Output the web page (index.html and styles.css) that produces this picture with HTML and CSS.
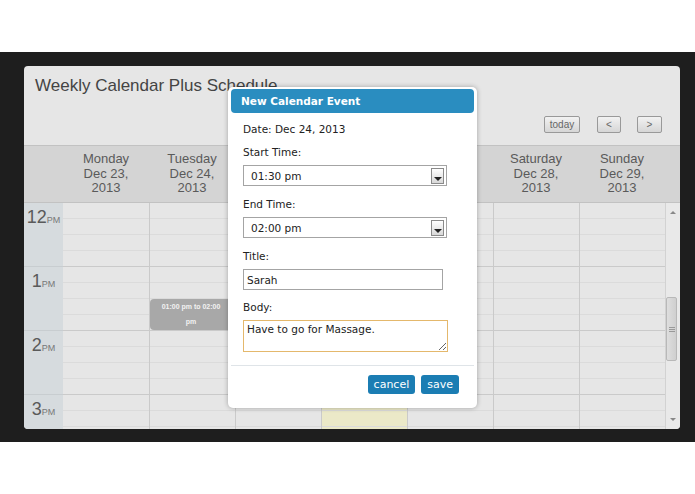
FILE: index.html
```html
<!DOCTYPE html>
<html lang="en">
<head>
    <meta charset="UTF-8">
    <title>Weekly Calendar Plus Schedule</title>
    <link rel="stylesheet" href="styles.css">
</head>
<body>
    <div class="screen">
        <div class="calendar">
            <!-- Toolbar -->
            <div class="toolbar">
                <h1 class="cal-title">Weekly Calendar Plus Schedule</h1>
                <div class="nav">
                    <button class="nav-btn nav-today">today</button>
                    <button class="nav-btn nav-prev">&lt;</button>
                    <button class="nav-btn nav-next">&gt;</button>
                </div>
            </div>

            <!-- Day headers -->
            <div class="week-head">
                <div></div>
                <div class="day-name">Monday<br>Dec 23,<br>2013</div>
                <div class="day-name">Tuesday<br>Dec 24,<br>2013</div>
                <div class="day-name">Wednesday<br>Dec 25,<br>2013</div>
                <div class="day-name">Thursday<br>Dec 26,<br>2013</div>
                <div class="day-name">Friday<br>Dec 27,<br>2013</div>
                <div class="day-name">Saturday<br>Dec 28,<br>2013</div>
                <div class="day-name">Sunday<br>Dec 29,<br>2013</div>
            </div>

            <!-- Hour grid -->
            <div class="week-body">
                <div class="hours">
                    <div class="hour-row">
                        <div class="time">12<span>PM</span></div>
                        <div class="cell"></div><div class="cell"></div><div class="cell"></div>
                        <div class="cell today"></div><div class="cell"></div><div class="cell"></div><div class="cell"></div>
                    </div>
                    <div class="hour-row">
                        <div class="time">1<span>PM</span></div>
                        <div class="cell"></div>
                        <div class="cell">
                            <div class="event">01:00 pm to 02:00 pm</div>
                        </div>
                        <div class="cell"></div>
                        <div class="cell today"></div><div class="cell"></div><div class="cell"></div><div class="cell"></div>
                    </div>
                    <div class="hour-row">
                        <div class="time">2<span>PM</span></div>
                        <div class="cell"></div><div class="cell"></div><div class="cell"></div>
                        <div class="cell today"></div><div class="cell"></div><div class="cell"></div><div class="cell"></div>
                    </div>
                    <div class="hour-row">
                        <div class="time">3<span>PM</span></div>
                        <div class="cell"></div><div class="cell"></div><div class="cell"></div>
                        <div class="cell today"></div><div class="cell"></div><div class="cell"></div><div class="cell"></div>
                    </div>
                </div>
                <div class="scrollbar">
                    <span class="arrow-up"></span>
                    <div class="thumb"><span class="grip"></span></div>
                    <span class="arrow-down"></span>
                </div>
            </div>

            <!-- New event dialog -->
            <div class="modal">
                <div class="modal-head">New Calendar Event</div>
                <div class="modal-body">
                    <div class="form-date">Date: Dec 24, 2013</div>
                    <label class="form-label">Start Time:</label>
                    <div class="select"><span>01:30 pm</span><span class="select-btn"></span></div>
                    <label class="form-label">End Time:</label>
                    <div class="select"><span>02:00 pm</span><span class="select-btn"></span></div>
                    <label class="form-label">Title:</label>
                    <input class="input" type="text" value="Sarah">
                    <label class="form-label">Body:</label>
                    <textarea class="textarea">Have to go for Massage.</textarea>
                </div>
                <div class="modal-foot">
                    <button class="btn">cancel</button>
                    <button class="btn">save</button>
                </div>
            </div>
        </div>
    </div>
</body>
</html>
```

FILE: styles.css
```css
* {
    box-sizing: border-box;
}

body {
    margin: 0;
    background: #ffffff;
    font-family: "Liberation Sans", Arial, sans-serif;
}

.screen {
    margin-top: 52px;
    height: 390px;
    background: #1e1e1e;
    padding: 14px 15px 0 24px;
}

.calendar {
    position: relative;
    width: 656px;
    height: 363px;
    background: #e6e6e6;
    border-radius: 4px;
    overflow: hidden;
    display: flex;
    flex-direction: column;
}

/* Toolbar */
.toolbar {
    height: 79px;
    flex: none;
    display: flex;
    justify-content: space-between;
    padding: 10px 18px 12px 11px;
}

.cal-title {
    margin: 0;
    font-size: 17px;
    line-height: 20px;
    font-weight: normal;
    color: #444;
}

.nav {
    align-self: flex-end;
    display: flex;
}

.nav-btn {
    height: 17px;
    padding: 0;
    border: 1px solid #999;
    border-radius: 2px;
    background: linear-gradient(#f2f2f2, #d6d6d6);
    font-family: "Liberation Sans", Arial, sans-serif;
    font-size: 10px;
    color: #666;
}

.nav-today {
    width: 36px;
    margin-right: 17px;
}

.nav-prev {
    width: 24px;
    margin-right: 16px;
}

.nav-next {
    width: 25px;
}

/* Day headers */
.week-head {
    flex: none;
    height: 58px;
    display: grid;
    grid-template-columns: 39px repeat(7, 1fr) 15px;
    align-items: center;
    background: #d4d4d4;
    border-top: 1px solid #c2c2c2;
    border-bottom: 1px solid #c2c2c2;
}

.day-name {
    text-align: center;
    font-size: 13px;
    line-height: 14.5px;
    color: #5a5a5a;
}

/* Hour grid */
.week-body {
    flex: 1;
    display: flex;
    overflow: hidden;
}

.hours {
    flex: 1;
}

.hour-row {
    height: 64px;
    display: grid;
    grid-template-columns: 39px repeat(7, 1fr);
}

.time {
    background: #d6dbde;
    border-bottom: 1px solid #c8cdd0;
    text-align: center;
    padding-top: 4px;
    font-size: 18px;
    line-height: 20px;
    color: #5a5a5a;
}

.time span {
    font-size: 9px;
    color: #777;
}

.cell {
    position: relative;
    border-left: 1px solid #cacaca;
    border-bottom: 1px solid #cacaca;
    background: repeating-linear-gradient(to bottom, transparent 0 15px, #dbdbdb 15px 16px);
}

.time + .cell {
    border-left: none;
}

.cell.today {
    background-color: #ebe9c8;
}

.event {
    position: absolute;
    top: 32px;
    left: 0;
    width: 82px;
    height: 31px;
    padding: 0 6px;
    background: #a8a8a8;
    border-radius: 4px;
    text-align: center;
    font-size: 7px;
    font-weight: bold;
    line-height: 15px;
    color: #f2f2f2;
}

/* Scrollbar */
.scrollbar {
    width: 15px;
    flex: none;
    display: flex;
    flex-direction: column;
    align-items: center;
    background: #e9e9e9;
    border-left: 1px solid #d2d2d2;
}

.arrow-up,
.arrow-down {
    width: 0;
    height: 0;
    border-left: 3px solid transparent;
    border-right: 3px solid transparent;
}

.arrow-up {
    margin-top: 8px;
    border-bottom: 3px solid #888;
}

.arrow-down {
    margin-top: auto;
    margin-bottom: 8px;
    border-top: 3px solid #888;
}

.thumb {
    width: 11px;
    height: 64px;
    margin-top: 83px;
    margin-right: 3px;
    background: linear-gradient(to right, #dedede, #cfcfcf);
    border: 1px solid #b8b8b8;
    border-radius: 2px;
    display: flex;
    align-items: center;
    justify-content: center;
}

.grip {
    width: 6px;
    height: 5px;
    border-top: 1px solid #999;
    border-bottom: 1px solid #999;
    background: linear-gradient(#999, #999) center / 6px 1px no-repeat;
}

/* Dialog */
.modal {
    position: absolute;
    left: 204px;
    top: 21px;
    width: 249px;
    height: 321px;
    padding: 2px 3px;
    background: #ffffff;
    border-radius: 5px;
    box-shadow: 0 0 5px rgba(0, 0, 0, 0.3);
    font-family: "DejaVu Sans", Verdana, sans-serif;
    font-size: 10.5px;
    color: #222;
}

.modal-head {
    height: 24px;
    padding-left: 10px;
    line-height: 24px;
    background: #2a8dc0;
    border-radius: 4px;
    color: #ffffff;
    font-weight: bold;
}

.modal-body {
    padding: 10px 12px 0 12px;
}

.form-date {
    line-height: 12px;
    margin-bottom: 11px;
}

.form-label {
    display: block;
    line-height: 12px;
    margin-bottom: 7px;
}

.select {
    width: 204px;
    height: 21px;
    margin-bottom: 12px;
    border: 1px solid #a4a4a4;
    display: flex;
    align-items: center;
    justify-content: space-between;
    padding: 0 2px 0 7px;
}

.select-btn {
    width: 13px;
    height: 16px;
    border: 1px solid #8a8a8a;
    background: linear-gradient(#ffffff, #d8d8d8);
    position: relative;
}

.select-btn::after {
    content: "";
    position: absolute;
    left: 2px;
    top: 8px;
    border-left: 4px solid transparent;
    border-right: 4px solid transparent;
    border-top: 4px solid #222;
}

.input {
    display: block;
    width: 200px;
    height: 21px;
    margin: 0 0 11px;
    padding: 0 3px;
    border: 1px solid #a4a4a4;
    font-family: "DejaVu Sans", Verdana, sans-serif;
    font-size: 10.5px;
    color: #222;
}

.textarea {
    display: block;
    width: 205px;
    height: 32px;
    margin: 0;
    padding: 2px 3px;
    border: 1px solid #e4b86c;
    font-family: "DejaVu Sans", Verdana, sans-serif;
    font-size: 10.5px;
    color: #222;
    resize: vertical;
}

.modal-foot {
    margin-top: 13px;
    border-top: 1px solid #dfe4e8;
    padding: 9px 15px 0 0;
    display: flex;
    justify-content: flex-end;
    gap: 6px;
}

.btn {
    height: 19px;
    padding: 0 6px;
    border: none;
    border-radius: 3px;
    background: #1b7db3;
    color: #ffffff;
    font-family: "DejaVu Sans", Verdana, sans-serif;
    font-size: 11px;
}
```
